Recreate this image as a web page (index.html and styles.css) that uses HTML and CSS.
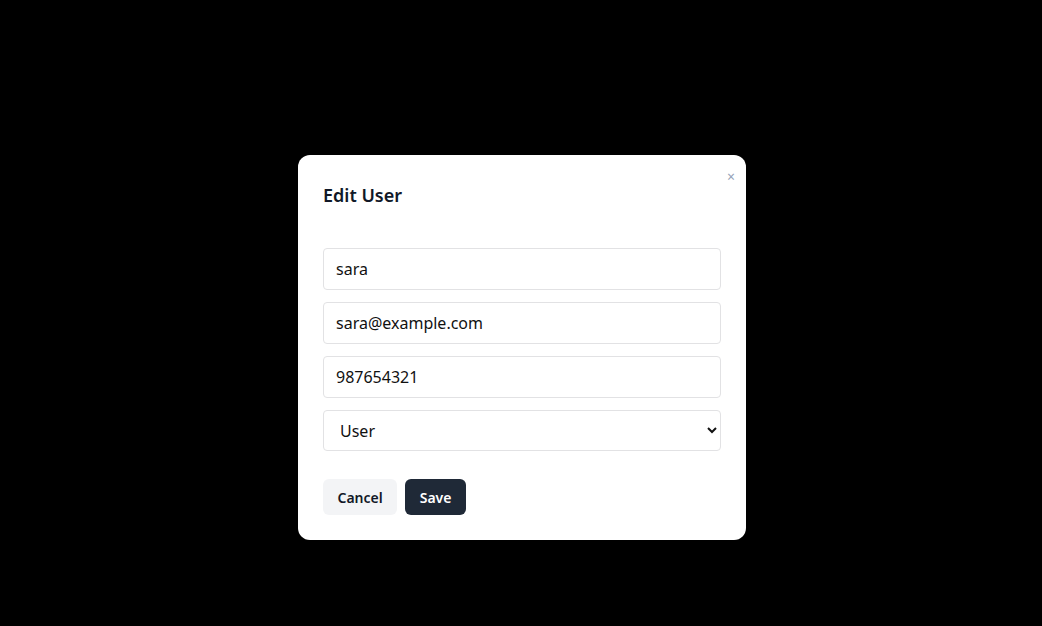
FILE: index.html
```html
<!DOCTYPE html>
<html lang="en">
<head>
<meta charset="utf-8">
<title>Edit User</title>
<link rel="stylesheet" href="styles.css">
</head>
<body>
<div class="overlay">
  <div class="modal">
    <button class="close" type="button" aria-label="Close">×</button>
    <h2 class="title">Edit User</h2>
    <form class="form">
      <input class="field" type="text" value="sara">
      <input class="field" type="email" value="sara@example.com">
      <input class="field" type="text" value="987654321">
      <select class="field select">
        <option>User</option>
        <option>Admin</option>
      </select>
      <div class="actions">
        <button type="button" class="btn btn-cancel">Cancel</button>
        <button type="button" class="btn btn-save">Save</button>
      </div>
    </form>
  </div>
</div>
</body>
</html>
```

FILE: styles.css
```css
* { box-sizing: border-box; }
html, body { margin: 0; padding: 0; height: 100%; }
body {
  background: #000;
  font-family: "Noto Sans", "Open Sans", sans-serif;
  color: #111827;
}
.overlay {
  height: 100%;
  display: flex;
  align-items: flex-start;
  justify-content: center;
  padding: 155px 0 0 2px;
}
.modal {
  position: relative;
  width: 448px;
  background: #fff;
  border-radius: 12px;
  padding: 24px 25px 25px;
}
.close {
  position: absolute;
  top: 12px;
  right: 7px;
  border: 0;
  background: none;
  color: #94a3b8;
  font-size: 14px;
  line-height: 20px;
  padding: 0 4px;
  font-family: "Noto Sans", sans-serif;
  cursor: pointer;
}
.title {
  margin: 0 0 37px;
  font-size: 18px;
  line-height: 32px;
  font-weight: 600;
  color: #111827;
}
.form {
  display: flex;
  flex-direction: column;
  gap: 12px;
  margin: 0;
}
.field {
  width: 100%;
  height: 42px;
  border: 1px solid #e2e2e4;
  border-radius: 4px;
  padding: 0 12px;
  font-family: inherit;
  font-size: 16px;
  color: #111;
  background: #fff;
  outline: none;
}
.select {
  height: 41px;
  padding: 0 8px 0 12px;
}
.actions {
  display: flex;
  gap: 8px;
  margin-top: 16px;
}
.btn {
  height: 36px;
  border: 0;
  border-radius: 6px;
  padding: 0 14.5px;
  font-family: inherit;
  font-size: 14px;
  font-weight: 600;
  cursor: pointer;
}
.btn-cancel { background: #f3f4f6; color: #111827; }
.btn-save { background: #1f2937; color: #fff; }
```
